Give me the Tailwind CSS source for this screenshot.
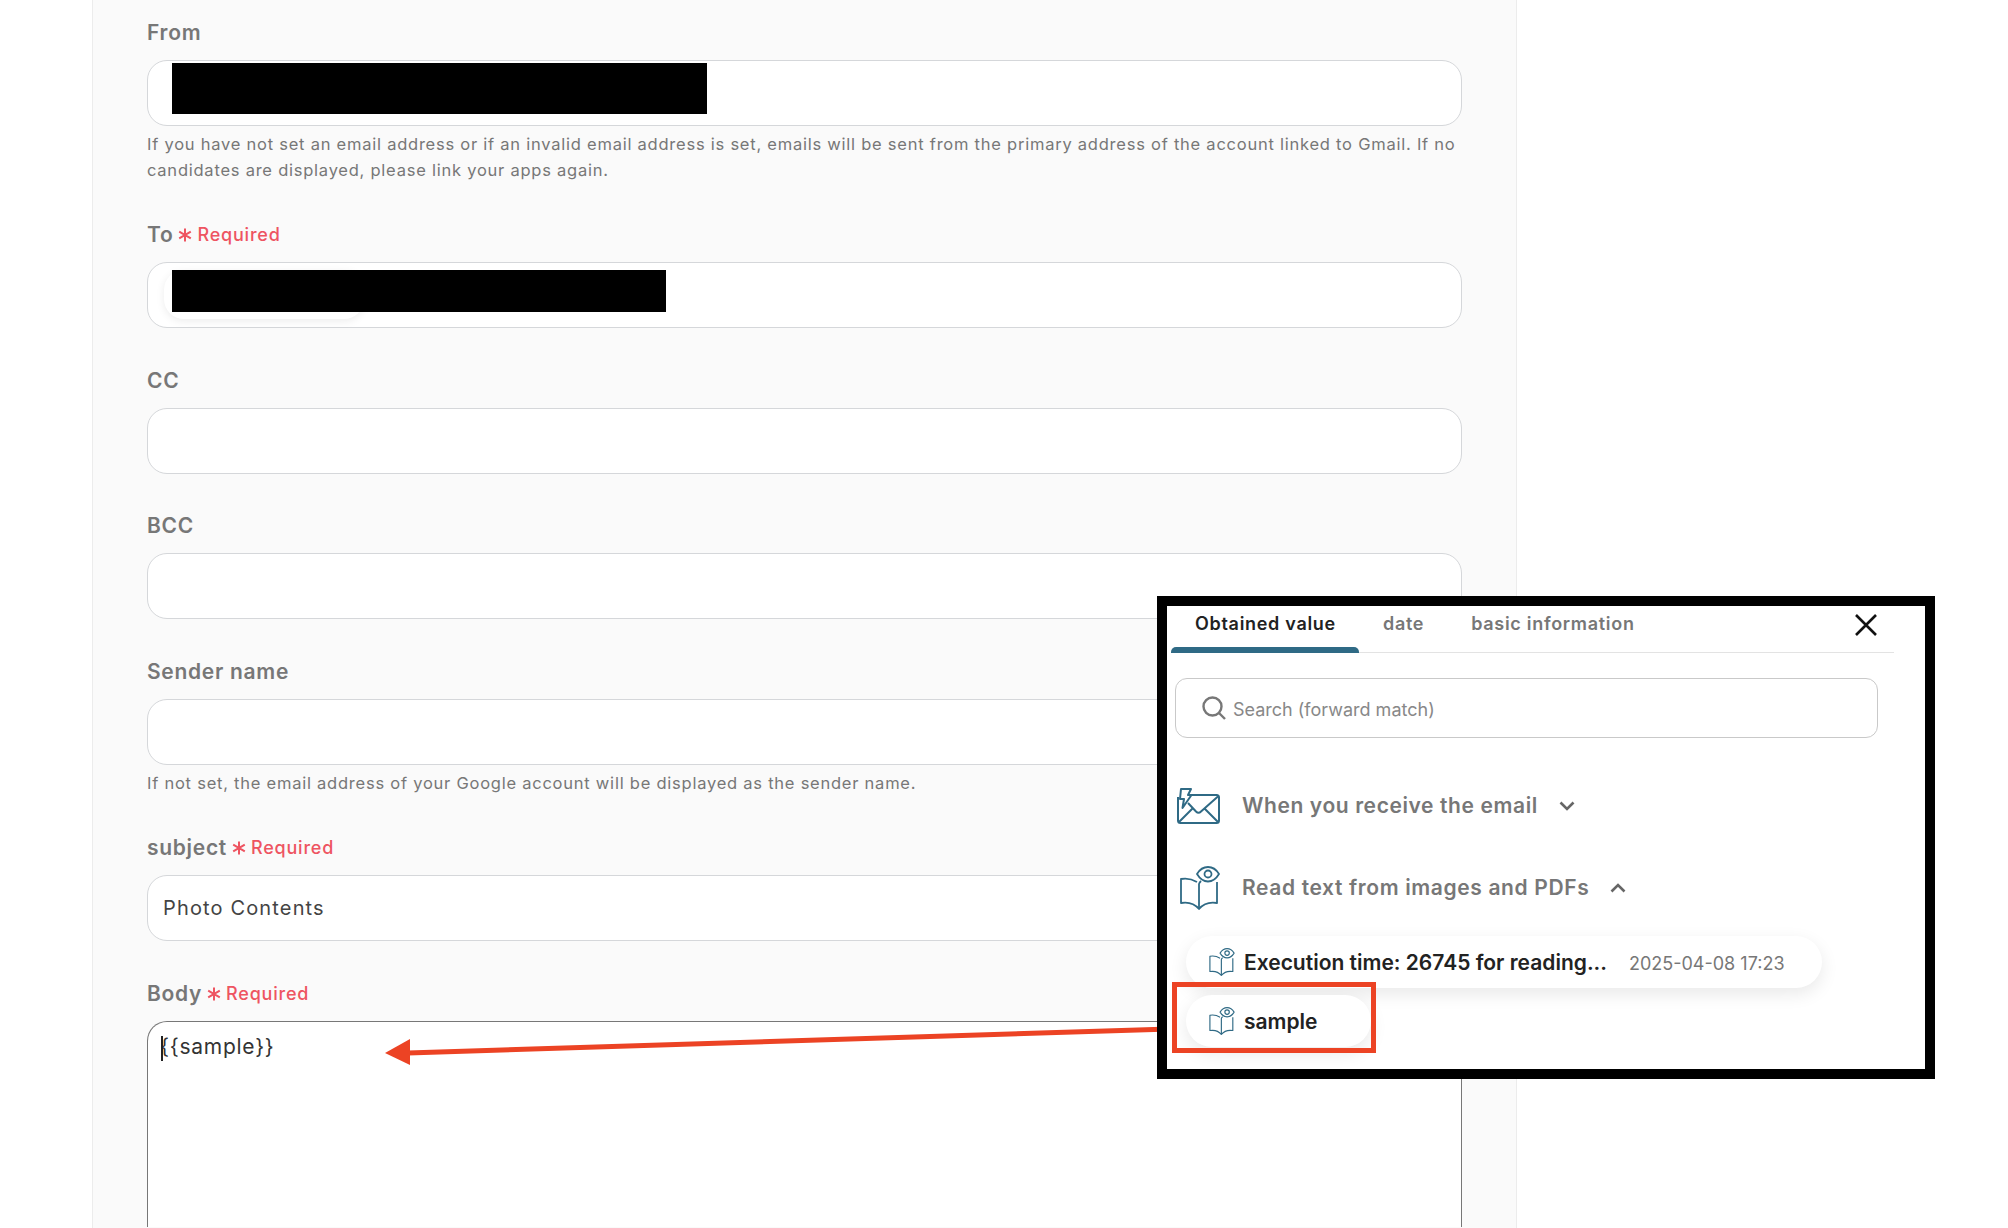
<!DOCTYPE html>
<html lang="en">
<head>
	<meta charset="utf-8">
	<title>Gmail action settings</title>
	<script src="https://cdn.jsdelivr.net/npm/@tailwindcss/browser@4"></script>
</head>
<body class="relative h-[1228px] w-[2008px] overflow-hidden bg-white font-['Inter',sans-serif] text-[#777]">
	<svg class="hidden">
		<symbol id="book-eye" viewBox="0 0 40 44" fill="none" stroke="currentColor">
			<path d="M17 16C12 13 6 12 1 13V37C7 36 14 37 19 43C24 37 31 36 37 37V16" stroke-width="1.800" stroke-linejoin="round"/>
			<path d="M19 43V18C19 17 19.500 16.500 21 15" stroke-width="1.800"/>
			<path d="M17 8C20 3 24 1 28 1C32 1 36 3 39 8C36 13 32 15.500 28 15.500C24 15.500 20 13 17 8Z" stroke-width="1.800" stroke-linejoin="round"/>
			<circle cx="28" cy="8" r="3.500" stroke-width="1.800"/>
		</symbol>
		<symbol id="required-mark" viewBox="0 0 14 14" fill="none" stroke="currentColor" stroke-width="2">
			<path d="M7 0.500V13.500M1.200 3.600L12.800 10.400M12.800 3.600L1.200 10.400"/>
		</symbol>
	</svg>

	<main class="ml-[92px] h-full w-[1425px] border-x border-[#ececec] bg-[#fafafa] pl-[54px] pr-[54px] pt-[19.500px]">
		<div class="flex flex-col gap-y-[39.600px]">
			<section>
				<label class="mb-[14px] block h-[26px] text-[21px] leading-[26px] font-semibold tracking-[0.7px]">From</label>
				<div class="h-[66px] rounded-[20px] border border-[#d5d7da] bg-white pt-[2px] pl-[24px]">
					<div class="h-[51px] w-[535px] bg-black"></div>
				</div>
				<p class="mt-[5px] text-[16.500px] leading-[26px] tracking-[0.76px]">If you have not set an email address or if an invalid email address is set, emails will be sent from the primary address of the account linked to Gmail. If no candidates are displayed, please link your apps again.</p>
			</section>
			<section>
				<label class="mb-[14px] flex h-[26px] items-center text-[21px] leading-[26px] font-semibold tracking-[0.7px]">To<svg class="ml-[5px] h-[14px] w-[14px] text-[#ee5461]"><use href="#required-mark"/></svg><span class="ml-[5px] text-[18px] font-medium tracking-[0.8px] text-[#ee5461]">Required</span></label>
				<div class="relative h-[66px] rounded-[20px] border border-[#d5d7da] bg-white pt-[7px] pl-[24px]">
					<div class="absolute top-[7px] left-[16px] h-[49px] w-[200px] rounded-[20px] bg-white shadow-[0_2px_8px_rgba(0,0,0,0.08)]"></div>
					<div class="relative h-[42px] w-[494px] bg-black"></div>
				</div>
			</section>
			<section>
				<label class="mb-[14px] block h-[26px] text-[21px] leading-[26px] font-semibold tracking-[0.7px]">CC</label>
				<div class="h-[66px] rounded-[20px] border border-[#d5d7da] bg-white"></div>
			</section>
			<section>
				<label class="mb-[14px] block h-[26px] text-[21px] leading-[26px] font-semibold tracking-[0.7px]">BCC</label>
				<div class="h-[66px] rounded-[20px] border border-[#d5d7da] bg-white"></div>
			</section>
			<section>
				<label class="mb-[14px] block h-[26px] text-[21px] leading-[26px] font-semibold tracking-[0.7px]">Sender name</label>
				<div class="h-[66px] rounded-[20px] border border-[#d5d7da] bg-white"></div>
				<p class="mt-[5px] text-[16.500px] leading-[26px] tracking-[0.76px]">If not set, the email address of your Google account will be displayed as the sender name.</p>
			</section>
			<section>
				<label class="mb-[14px] flex h-[26px] items-center text-[21px] leading-[26px] font-semibold tracking-[0.7px]">subject<svg class="ml-[5px] h-[14px] w-[14px] text-[#ee5461]"><use href="#required-mark"/></svg><span class="ml-[5px] text-[18px] font-medium tracking-[0.8px] text-[#ee5461]">Required</span></label>
				<div class="flex h-[66px] items-center rounded-[20px] border border-[#d5d7da] bg-white pl-[15px] text-[20px] tracking-[1.15px] text-[#444]">Photo Contents</div>
			</section>
			<section>
				<label class="mb-[14px] flex h-[26px] items-center text-[21px] leading-[26px] font-semibold tracking-[0.7px]">Body<svg class="ml-[5px] h-[14px] w-[14px] text-[#ee5461]"><use href="#required-mark"/></svg><span class="ml-[5px] text-[18px] font-medium tracking-[0.8px] text-[#ee5461]">Required</span></label>
				<div class="h-[206px] rounded-t-[20px] border border-b-0 border-[#777] bg-white pt-[10px] pl-[12px] text-[21px] leading-[30px] tracking-[0.75px] text-[#333]"><span class="relative">{{sample}}<span class="absolute top-[2px] left-[1px] h-[25px] w-[2px] bg-[#222]"></span></span></div>
			</section>
		</div>
	</main>

	<!-- annotation arrow -->
	<svg class="absolute top-0 left-0" width="2008" height="1228" fill="none">
		<path d="M408 1053L1170 1029" stroke="#ec4324" stroke-width="5"/>
		<path d="M385 1053L410 1039V1065Z" fill="#ec4324"/>
	</svg>

	<!-- pasted popup screenshot -->
	<div class="absolute top-[596px] left-[1157px] h-[483px] w-[778px] border-x-[10px] border-y-[10px] border-black bg-white">
		<div class="ml-[4px] flex h-[47px] w-[723px] border-b border-[#e3e3e3] text-[18px] font-semibold tracking-[0.7px]">
			<div class="relative w-[188px] pt-[4px] pl-[24px] text-[#222]">Obtained value<span class="absolute -bottom-px left-0 h-[6px] w-full rounded-t-[5px] bg-[#2f6a85]"></span></div>
			<div class="ml-[24px] pt-[4px]">date</div>
			<div class="ml-[47px] pt-[4px]">basic information</div>
			<svg class="absolute top-[8px] left-[688px]" width="22" height="22" viewBox="0 0 22 22" stroke="#111" stroke-width="2.600"><path d="M1 1L21 21M21 1L1 21"/></svg>
		</div>
		<div class="mt-[25px] ml-[8px] flex h-[60px] w-[703px] items-center rounded-[12px] border border-[#c9c9c9] pl-[26px] text-[18px] text-[#888]">
			<svg width="24" height="24" viewBox="0 0 24 24" fill="none" stroke="#777" stroke-width="2.400"><circle cx="10.500" cy="10.500" r="9"/><path d="M17 17L23 23"/></svg>
			<span class="ml-[7px] pt-[2px]">Search (forward match)</span>
		</div>
		<div class="mt-[50px] ml-[10px] flex h-[36px] items-center">
			<svg class="text-[#2f6a85]" width="43" height="36" viewBox="0 0 43 36" fill="none" stroke="currentColor" stroke-width="2" stroke-linejoin="round"><path d="M14 7H39.500C41 7 42 8 42 9.500V32.500C42 34 41 35 39.500 35H3.500C2 35 1 34 1 32.500V9"/><path d="M2 34L16 20M41 34L27 20M11 15L19 23.500C20.500 25 22.500 25 24 23.500L41.500 8"/><path d="M4 1H14L11 7H14.500L5.500 20L7 11H3Z" fill="white"/></svg>
			<span class="ml-[22px] text-[21px] font-semibold tracking-[0.6px]">When you receive the email</span>
			<svg class="ml-[21px]" width="16" height="10" viewBox="0 0 16 10" fill="none" stroke="#666" stroke-width="2.600"><path d="M1.500 1.500L8 8L14.500 1.500"/></svg>
		</div>
		<div class="mt-[42px] ml-[13px] flex h-[44px] items-center">
			<svg class="h-[44px] w-[40px] text-[#2f6a85]"><use href="#book-eye"/></svg>
			<span class="ml-[22px] text-[21px] font-semibold tracking-[0.63px]">Read text from images and PDFs</span>
			<svg class="ml-[21px]" width="16" height="10" viewBox="0 0 16 10" fill="none" stroke="#666" stroke-width="2.600"><path d="M1.500 8.500L8 2L14.500 8.500"/></svg>
		</div>
		<div class="mt-[26px] ml-[19px] flex h-[52px] w-[636px] items-center rounded-[26px] bg-white pl-[23px] shadow-[0_6px_18px_rgba(0,0,0,0.09)]">
			<svg class="h-[28px] w-[26px] text-[#2f6a85]"><use href="#book-eye"/></svg>
			<span class="ml-[9px] pt-[2px] text-[21px] font-semibold text-[#222]">Execution time: 26745 for reading...</span>
			<span class="ml-[22px] pt-[2px] text-[18px]">2025-04-08 17:23</span>
		</div>
		<div class="mt-[7px] ml-[19px] flex h-[52px] w-[185px] items-center rounded-[26px] bg-white pl-[23px] shadow-[0_6px_18px_rgba(0,0,0,0.09)]">
			<svg class="h-[28px] w-[26px] text-[#2f6a85]"><use href="#book-eye"/></svg>
			<span class="ml-[9px] pt-[2px] text-[21px] font-semibold text-[#222]">sample</span>
		</div>
		<div class="absolute top-[376px] left-[5px] h-[71px] w-[204px] border-[5px] border-[#ec4324]"></div>
	</div>
</body>
</html>
